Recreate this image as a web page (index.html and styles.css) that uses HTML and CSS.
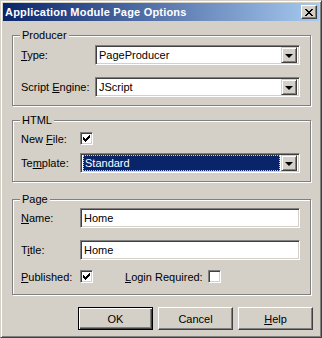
FILE: index.html
```html
<!DOCTYPE html>
<html lang="en">
<head>
  <meta charset="UTF-8">
  <meta name="viewport" content="width=device-width, initial-scale=1.0">
  <title>Application Module Page Options</title>
  <link rel="stylesheet" href="styles.css">
</head>
<body>
  <div class="window">
    <div class="titlebar">
      <span class="caption">Application Module Page Options</span>
      <button class="close-btn" title="Close">
        <svg width="8" height="7" viewBox="0 0 8 7" shape-rendering="crispEdges">
          <path d="M0 0h2v1H0zM6 0h2v1H6zM1 1h2v1H1zM5 1h2v1H5zM2 2h4v1H2zM3 3h2v1H3zM2 4h4v1H2zM1 5h2v1H1zM5 5h2v1H5zM0 6h2v1H0zM6 6h2v1H6z" fill="#000"/>
        </svg>
      </button>
    </div>

    <!-- Producer -->
    <div class="group group-producer">
      <div class="group-title">Producer</div>
      <div class="row row-type">
        <label class="label label-wide"><u>T</u>ype:</label>
        <div class="combo combo-short">
          <span class="combo-text">PageProducer</span>
          <span class="combo-arrow"><i class="tri"></i></span>
        </div>
      </div>
      <div class="row row-engine">
        <label class="label label-wide">Script <u>E</u>ngine:</label>
        <div class="combo combo-short">
          <span class="combo-text">JScript</span>
          <span class="combo-arrow"><i class="tri"></i></span>
        </div>
      </div>
    </div>

    <!-- HTML -->
    <div class="group group-html">
      <div class="group-title">HTML</div>
      <div class="row row-check">
        <label class="label">New <u>F</u>ile:</label>
        <span class="checkbox">
          <svg width="7" height="7" viewBox="0 0 7 7" shape-rendering="crispEdges">
            <path d="M6 0h1v3H6zM5 1h1v3H5zM4 2h1v3H4zM3 3h1v3H3zM2 4h1v3H2zM1 3h1v3H1zM0 2h1v3H0z" fill="#000"/>
          </svg>
        </span>
      </div>
      <div class="row row-template">
        <label class="label">Te<u>m</u>plate:</label>
        <div class="combo combo-long">
          <span class="combo-text selected"><span class="focus">Standard</span></span>
          <span class="combo-arrow"><i class="tri"></i></span>
        </div>
      </div>
    </div>

    <!-- Page -->
    <div class="group group-page">
      <div class="group-title">Page</div>
      <div class="row row-name">
        <label class="label"><u>N</u>ame:</label>
        <div class="edit">Home</div>
      </div>
      <div class="row row-title">
        <label class="label">T<u>i</u>tle:</label>
        <div class="edit">Home</div>
      </div>
      <div class="row row-flags">
        <label class="label"><u>P</u>ublished:</label>
        <span class="checkbox">
          <svg width="7" height="7" viewBox="0 0 7 7" shape-rendering="crispEdges">
            <path d="M6 0h1v3H6zM5 1h1v3H5zM4 2h1v3H4zM3 3h1v3H3zM2 4h1v3H2zM1 3h1v3H1zM0 2h1v3H0z" fill="#000"/>
          </svg>
        </span>
        <label class="label label-login"><u>L</u>ogin Required:</label>
        <span class="checkbox"></span>
      </div>
    </div>

    <div class="buttons">
      <button class="btn btn-default">OK</button>
      <button class="btn">Cancel</button>
      <button class="btn"><u>H</u>elp</button>
    </div>
  </div>
</body>
</html>
```

FILE: styles.css
```css
body {
  margin: 0;
  padding: 0;
  background-color: #d4d0c8;
  font-family: "Liberation Sans", Arial, sans-serif;
  font-size: 11px;
  color: #000;
}

.window {
  width: 322px;
  height: 338px;
  box-sizing: border-box;
  padding: 2px;
  background-color: #d4d0c8;
  border: 1px solid;
  border-color: #d4d0c8 #404040 #404040 #d4d0c8;
  box-shadow: inset 1px 1px 0 #fff, inset -1px -1px 0 #808080;
}

.titlebar {
  height: 18px;
  display: flex;
  align-items: center;
  justify-content: space-between;
  padding: 0 2px 0 2px;
  background: linear-gradient(to right, #0a246a, #a6caf0);
}

.caption {
  color: #fff;
  font-weight: bold;
  font-size: 11px;
  letter-spacing: 0.2px;
}

.close-btn {
  width: 16px;
  height: 14px;
  padding: 0;
  display: flex;
  align-items: center;
  justify-content: center;
  background-color: #d4d0c8;
  border: 1px solid;
  border-color: #fff #404040 #404040 #fff;
  box-shadow: inset -1px -1px 0 #808080;
}

/* group boxes */
.group {
  margin-left: 9px;
  width: 299px;
  box-sizing: border-box;
  border: 1px solid #808080;
  box-shadow: 1px 1px 0 #fff, inset 1px 1px 0 #fff;
  padding: 0 9px 0 8px;
}

.group-title {
  margin: -7px 0 0 -1px;
  width: fit-content;
  padding: 0 2px;
  line-height: 13px;
  background-color: #d4d0c8;
}

.group-producer {
  margin-top: 14px;
  padding-bottom: 8px;
}

.group-html {
  margin-top: 14px;
  padding-bottom: 8px;
}

.group-page {
  margin-top: 17px;
  padding-bottom: 11px;
}

.row {
  display: flex;
  align-items: center;
  height: 20px;
}

.row-type {
  margin-top: 3px;
}

.row-engine {
  margin-top: 12px;
}

.row-check {
  margin-top: 5px;
  height: 13px;
}

.row-template {
  margin-top: 8px;
}

.row-name {
  margin-top: 2px;
}

.row-title {
  margin-top: 12px;
}

.row-flags {
  margin-top: 10px;
  height: 13px;
}

.label {
  width: 59px;
  flex: none;
  white-space: nowrap;
}

.label-wide {
  width: 74px;
}

.label-login {
  width: 83px;
  margin-left: 32px;
}

/* sunken fields */
.combo,
.edit,
.checkbox {
  box-sizing: border-box;
  background-color: #fff;
  border: 1px solid;
  border-color: #808080 #fff #fff #808080;
  box-shadow: inset 1px 1px 0 #404040, inset -1px -1px 0 #d4d0c8;
}

.combo {
  display: flex;
  align-items: center;
  height: 20px;
  padding: 2px;
}

.combo-short {
  width: 205px;
}

.combo-long {
  width: 220px;
}

.combo-text {
  flex: 1;
  height: 16px;
  line-height: 16px;
  padding-left: 1px;
}

.combo-text.selected {
  background-color: #0a246a;
  color: #fff;
  padding: 0;
  margin-right: 1px;
}

.focus {
  display: block;
  height: 14px;
  line-height: 14px;
  padding-left: 1px;
  border: 1px dotted #d4d0c8;
}

.combo-arrow {
  width: 16px;
  height: 16px;
  box-sizing: border-box;
  display: flex;
  align-items: center;
  justify-content: center;
  background-color: #d4d0c8;
  border: 1px solid;
  border-color: #d4d0c8 #404040 #404040 #d4d0c8;
  box-shadow: inset 1px 1px 0 #fff, inset -1px -1px 0 #808080;
}

.tri {
  width: 0;
  height: 0;
  border-left: 4px solid transparent;
  border-right: 4px solid transparent;
  border-top: 4px solid #000;
  margin-top: 1px;
}

.edit {
  width: 220px;
  height: 20px;
  line-height: 16px;
  padding: 1px 3px;
}

.checkbox {
  width: 13px;
  height: 13px;
  flex: none;
  display: flex;
  align-items: center;
  justify-content: center;
}

/* buttons */
.buttons {
  display: flex;
  justify-content: flex-end;
  gap: 5px;
  margin-top: 12px;
  padding-right: 6px;
}

.btn {
  width: 75px;
  height: 23px;
  padding: 0;
  font-family: "Liberation Sans", Arial, sans-serif;
  font-size: 11px;
  color: #000;
  background-color: #d4d0c8;
  border: 1px solid;
  border-color: #fff #404040 #404040 #fff;
  box-shadow: inset -1px -1px 0 #808080;
}

.btn-default {
  border: 1px solid #000;
  box-shadow: inset 1px 1px 0 #fff, inset -1px -1px 0 #404040, inset -2px -2px 0 #808080;
}
```
